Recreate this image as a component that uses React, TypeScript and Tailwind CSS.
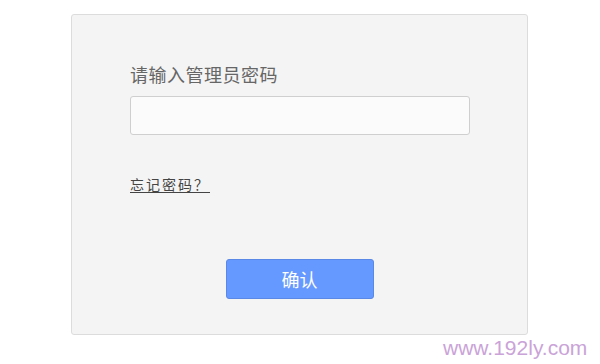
import { useState } from "react";

export default function App() {
  const [password, setPassword] = useState("");

  return (
    <div className="relative w-[600px] h-[364px] bg-white overflow-hidden" style={{ fontFamily: '"Noto Sans CJK SC", "Liberation Sans", sans-serif' }}>
      <div className="ml-[71px] mt-[14px] w-[457px] h-[321px] bg-[#f4f4f4] border border-[#dcdcdc] rounded-[3px] pl-[58px] pt-[47px]">
        <p className="text-[18px] leading-[24px] text-[#666] tracking-[0.5px]">请输入管理员密码</p>
        <input
          type="password"
          value={password}
          onChange={(e) => setPassword(e.target.value)}
          className="mt-[10px] block w-[340px] h-[39px] bg-[#fbfbfb] border border-[#cfcfcf] rounded-[3px] px-2 outline-none"
        />
        <a href="#" className="mt-[39px] inline-block text-[14px] leading-[20px] tracking-[2px] text-[#444] underline underline-offset-2">
          忘记密码？
        </a>
        <div className="mt-[64px] flex justify-center pr-[58px]">
          <button className="w-[148px] h-[40px] bg-[#6699ff] border border-[#5a88e6] rounded-[3px] text-white text-[18px]">
            确认
          </button>
        </div>
      </div>
      <span
        className="absolute left-[443px] top-[336px] text-[21px] leading-[24px] text-[#caa3d8]"
        style={{ fontFamily: '"Liberation Sans", Arial, sans-serif' }}
      >
        www.192ly.com
      </span>
    </div>
  );
}
